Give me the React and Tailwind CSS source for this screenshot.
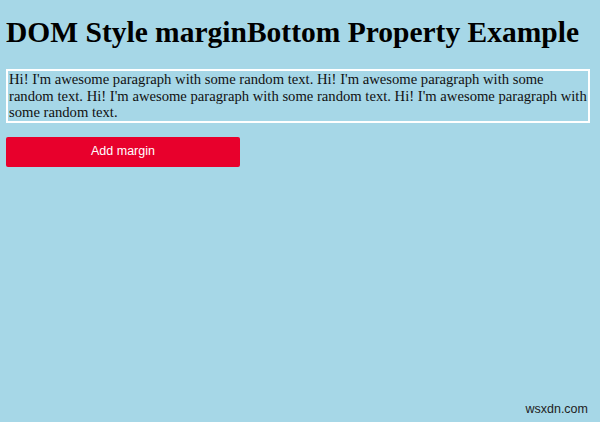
import React from "react";

export default function App() {
  return (
    <div className="relative h-[422px] w-[600px] overflow-hidden bg-[#a6d7e7] pl-[6px] pr-[10px] pt-[14px] text-black">
      <h1 className="font-['Liberation_Serif',serif] text-[29.5px] font-bold leading-[36px]">
        DOM Style marginBottom Property Example
      </h1>
      <p className="mt-[19px] whitespace-nowrap border-2 border-white px-[1px] font-['Liberation_Serif',serif] text-[14.65px] leading-[16.5px] text-[#111]">
        Hi! I'm awesome paragraph with some random text. Hi! I'm awesome paragraph with some
        <br />
        random text. Hi! I'm awesome paragraph with some random text. Hi! I'm awesome paragraph with
        <br />
        some random text.
      </p>
      <button className="mt-[14px] h-[30px] w-[234px] rounded-[2px] bg-[#e8002c] font-['Liberation_Sans',sans-serif] text-[12.5px] text-white">
        Add margin
      </button>
      <div className="absolute bottom-[3px] right-[12px] font-['Liberation_Sans',sans-serif] text-[12.5px] text-[#222]">
        wsxdn.com
      </div>
    </div>
  );
}
